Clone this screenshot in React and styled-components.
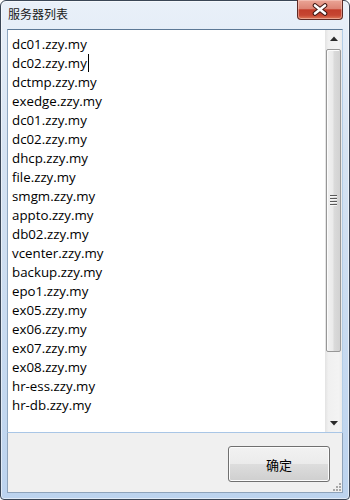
import React from "react"
import styled, { createGlobalStyle } from "styled-components"

const servers = [
  "dc01.zzy.my",
  "dc02.zzy.my",
  "dctmp.zzy.my",
  "exedge.zzy.my",
  "dc01.zzy.my",
  "dc02.zzy.my",
  "dhcp.zzy.my",
  "file.zzy.my",
  "smgm.zzy.my",
  "appto.zzy.my",
  "db02.zzy.my",
  "vcenter.zzy.my",
  "backup.zzy.my",
  "epo1.zzy.my",
  "ex05.zzy.my",
  "ex06.zzy.my",
  "ex07.zzy.my",
  "ex08.zzy.my",
  "hr-ess.zzy.my",
  "hr-db.zzy.my",
]

const App = () => {
  return (
    <>
      <GlobalStyle />
      <Window>
        <TitleBar>
          <Title>服务器列表</Title>
          <CloseButton>
            <svg width="18" height="13" viewBox="0 0 18 13">
              <path
                d="M4 2.5 L14 10.5 M14 2.5 L4 10.5"
                stroke="#3e1612"
                strokeWidth="4.6"
                strokeLinecap="round"
              />
              <path
                d="M4 2.5 L14 10.5 M14 2.5 L4 10.5"
                stroke="#ffffff"
                strokeWidth="2.6"
                strokeLinecap="round"
              />
            </svg>
          </CloseButton>
        </TitleBar>
        <Client>
          <ListBox>
            <ListContent>
              {servers.map((name, i) => (
                <Item key={i}>
                  {name}
                  {i === 1 && <Caret />}
                </Item>
              ))}
            </ListContent>
            <ScrollBar>
              <ArrowButton>
                <svg width="8" height="5" viewBox="0 0 8 5">
                  <path d="M0 5 L4 0.5 L8 5 Z" fill="#2a2a2a" />
                </svg>
              </ArrowButton>
              <Track>
                <Thumb>
                  <Grip>
                    <span />
                    <span />
                    <span />
                    <span />
                  </Grip>
                </Thumb>
              </Track>
              <ArrowButton>
                <svg width="8" height="5" viewBox="0 0 8 5">
                  <path d="M0 0 L8 0 L4 4.5 Z" fill="#2a2a2a" />
                </svg>
              </ArrowButton>
            </ScrollBar>
          </ListBox>
          <Footer>
            <Button>确定</Button>
            <SizeGrip>
              <svg width="10" height="10" viewBox="0 0 10 10">
                <g fill="#a8a8a8">
                  <rect x="8" y="2" width="2" height="2" />
                  <rect x="5" y="5" width="2" height="2" />
                  <rect x="8" y="5" width="2" height="2" />
                  <rect x="2" y="8" width="2" height="2" />
                  <rect x="5" y="8" width="2" height="2" />
                  <rect x="8" y="8" width="2" height="2" />
                </g>
              </svg>
            </SizeGrip>
          </Footer>
        </Client>
      </Window>
    </>
  )
}

/* STYLE */
const GlobalStyle = createGlobalStyle`
  body {
    margin: 0;
    background: #ffffff;
  }
`

const Window = styled.div`
  width: 350px;
  height: 500px;
  box-sizing: border-box;
  border: 1px solid #3a4656;
  border-radius: 6px 6px 4px 4px;
  background: linear-gradient(to bottom, #e9f0f9 0%, #d6e3f2 30%, #bcd3ee 100%);
  box-shadow: inset 0 0 0 1px rgba(255, 255, 255, 0.55);
  display: flex;
  flex-direction: column;
  padding: 0 6px 6px 6px;
  font-family: "Noto Sans", "Noto Sans CJK SC", sans-serif;
`

const TitleBar = styled.div`
  height: 28px;
  display: flex;
  align-items: flex-start;
`

const Title = styled.div`
  padding: 5px 0 0 1px;
  font-family: "Noto Sans CJK SC", sans-serif;
  font-size: 12px;
  line-height: 16px;
  color: #1a1a1a;
`

const CloseButton = styled.div`
  margin-left: auto;
  margin-top: -1px;
  width: 46px;
  height: 20px;
  box-sizing: border-box;
  border: 1px solid #5e2a25;
  border-top: none;
  border-radius: 0 0 4px 4px;
  background: linear-gradient(
    to bottom,
    #eaa596 0%,
    #dd8474 45%,
    #c23d2a 52%,
    #c64632 80%,
    #de7a5a 100%
  );
  box-shadow: inset 0 0 0 1px rgba(255, 220, 210, 0.45);
  display: flex;
  align-items: center;
  justify-content: center;
`

const Client = styled.div`
  flex: 1;
  display: flex;
  flex-direction: column;
  background: #f0f0f0;
  border: 1px solid #8ea3ba;
  border-top: none;
`

const ListBox = styled.div`
  height: 404px;
  box-sizing: border-box;
  border: 1px solid;
  border-color: #5c7896 #b3cde6 #a9c6e6 #8fa7c0;
  background: #ffffff;
  display: flex;
  margin-left: -1px;
  margin-right: -1px;
`

const ListContent = styled.div`
  flex: 1;
  padding: 5px 0 0 4px;
  overflow: hidden;
`

const Item = styled.div`
  height: 19px;
  font-family: "Open Sans", sans-serif;
  font-size: 13.3px;
  line-height: 19px;
  color: #000000;
  white-space: nowrap;
`

const Caret = styled.span`
  display: inline-block;
  width: 1px;
  height: 18px;
  background: #000000;
  vertical-align: -4px;
  margin-left: 1px;
`

const ScrollBar = styled.div`
  width: 17px;
  display: flex;
  flex-direction: column;
  background: linear-gradient(to right, #e3e3e3 0%, #f0f0f0 20%, #f3f3f3 80%, #ebebeb 100%);
`

const ArrowButton = styled.div`
  height: 17px;
  display: flex;
  align-items: center;
  justify-content: center;
`

const Track = styled.div`
  flex: 1;
  padding: 2px 0 0 0;
`

const Thumb = styled.div`
  height: 303px;
  margin: 0 1px;
  box-sizing: border-box;
  border: 1px solid #979797;
  border-radius: 2px;
  background: linear-gradient(to right, #f2f2f2 0%, #eaeaea 45%, #dadada 55%, #d2d2d2 100%);
  box-shadow: inset 1px 1px 0 #fbfbfb;
  display: flex;
  align-items: center;
  justify-content: center;
`

const Grip = styled.div`
  display: flex;
  flex-direction: column;
  gap: 1px;

  span {
    display: block;
    width: 7px;
    height: 1px;
    background: #5a5a5a;
    border-bottom: 1px solid #f6f6f6;
  }
`

const Footer = styled.div`
  flex: 1;
  display: flex;
  justify-content: flex-end;
  align-items: flex-start;
  padding: 13px 0 0 0;
  position: relative;
`

const Button = styled.div`
  width: 102px;
  height: 36px;
  margin-right: 12px;
  box-sizing: border-box;
  border: 1px solid #707070;
  border-radius: 3px;
  background: linear-gradient(to bottom, #f2f2f2 0%, #ebebeb 50%, #dddddd 51%, #cfcfcf 100%);
  box-shadow: inset 0 0 0 1px #fcfcfc;
  display: flex;
  align-items: center;
  justify-content: center;
  font-family: "Noto Sans CJK SC", sans-serif;
  font-size: 13px;
  color: #000000;
`

const SizeGrip = styled.div`
  position: absolute;
  right: 1px;
  bottom: 1px;
  width: 10px;
  height: 10px;
  display: flex;
`

export default App
